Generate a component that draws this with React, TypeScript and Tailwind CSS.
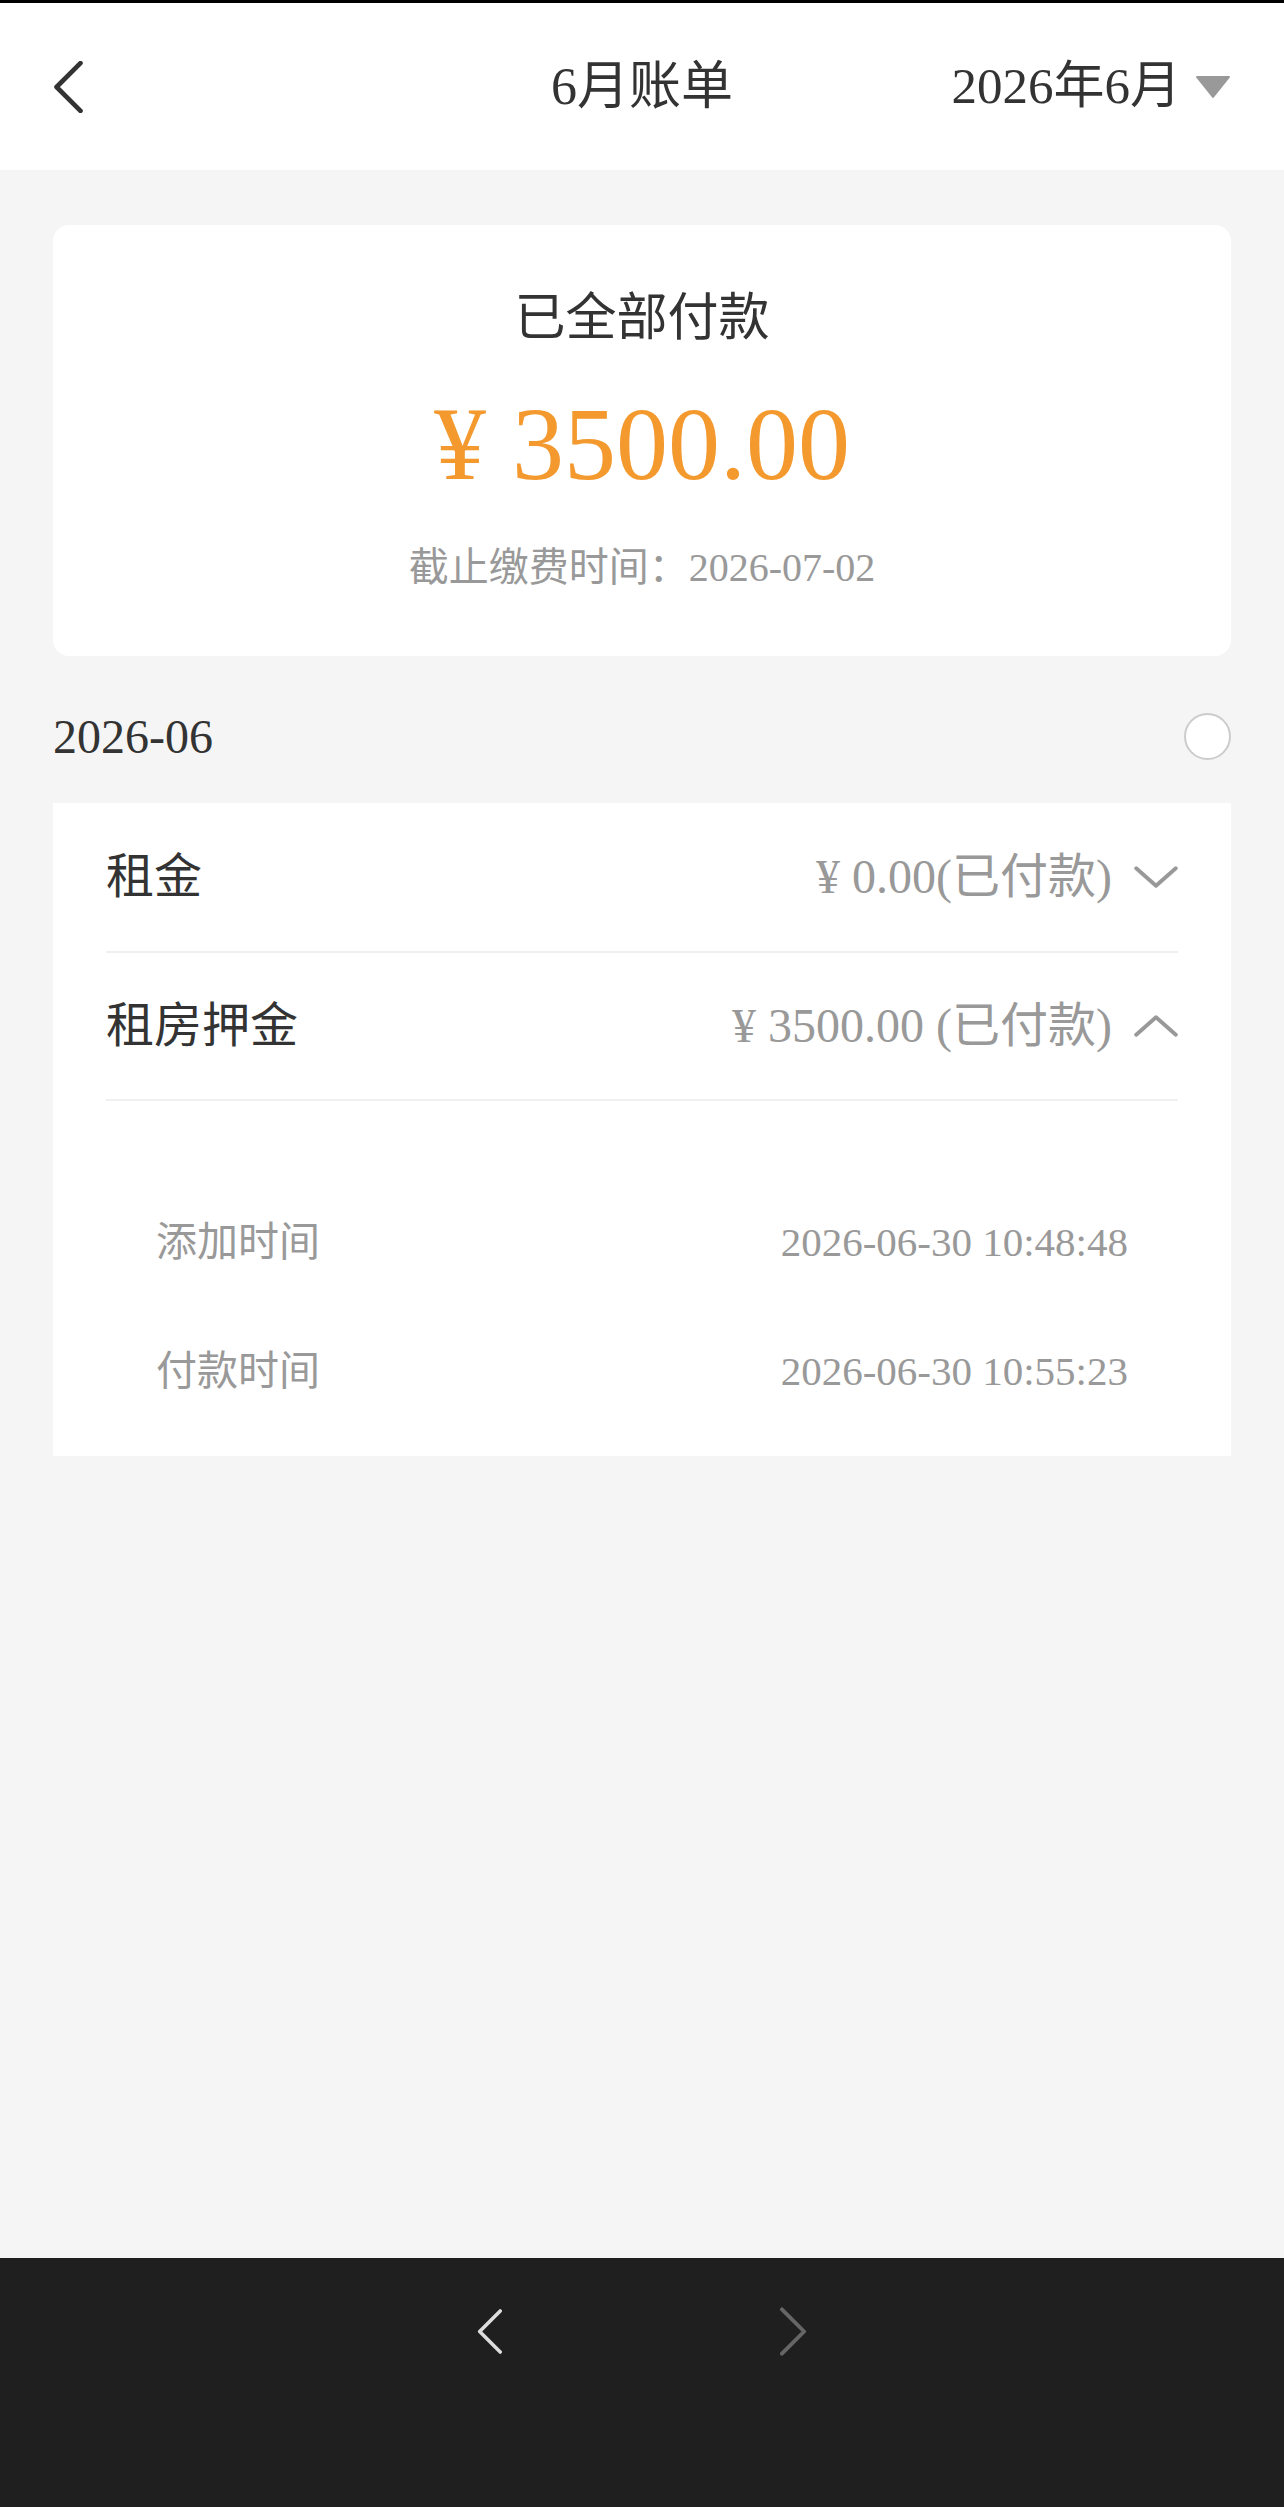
import { ReactNode } from 'react';

const items = [
    { label: '租金', value: '¥ 0.00(已付款)', open: false },
    { label: '租房押金', value: '¥ 3500.00 (已付款)', open: true },
];

const details = [
    { label: '添加时间', value: '2026-06-30 10:48:48' },
    { label: '付款时间', value: '2026-06-30 10:55:23' },
];

function Chevron({ dir, className }: { dir: 'left' | 'right' | 'up' | 'down'; className?: string }) {
    const paths: Record<string, ReactNode> = {
        left: <polyline points="26,2 3,25 26,48" />,
        right: <polyline points="2,2 25,25 2,48" />,
        down: <polyline points="2,2 20,18 38,2" />,
        up: <polyline points="2,18 20,2 38,18" />,
    };
    const box = dir === 'left' || dir === 'right' ? '0 0 28 50' : '0 0 40 20';
    return (
        <svg viewBox={box} className={className} fill="none" stroke="currentColor" strokeLinecap="round" strokeLinejoin="round">
            {paths[dir]}
        </svg>
    );
}

export default function App() {
    return (
        <div className="min-h-[2507px] flex flex-col bg-[#f5f5f5] font-['Liberation_Serif','Noto_Sans_CJK_SC',serif] text-[#333333]">
            <div className="h-[3px] bg-black" />

            {/* Header */}
            <header className="h-[167px] bg-white grid grid-cols-[1fr_auto_1fr] items-center px-[53px]">
                <div>
                    <Chevron dir="left" className="w-[30px] h-[52px] text-[#333333] [stroke-width:4.5]" />
                </div>
                <h1 className="text-[52px] leading-none">6月账单</h1>
                <div className="flex items-center justify-end gap-[14px]">
                    <span className="text-[51px] leading-none">2026年6月</span>
                    <svg viewBox="0 0 36 24" className="w-[36px] h-[24px] text-[#999999]">
                        <path d="M2 2 L34 2 L18 22 Z" fill="currentColor" stroke="currentColor" strokeWidth="2" strokeLinejoin="round" />
                    </svg>
                </div>
            </header>

            <main className="flex-1 px-[53px]">
                {/* Summary card */}
                <section className="mt-[55px] bg-white rounded-[16px] flex flex-col items-center pt-[68px] pb-[68px]">
                    <div className="text-[51px] leading-none">已全部付款</div>
                    <div className="mt-[48px] text-[104px] leading-none text-[#f3992e]">¥ 3500.00</div>
                    <div className="mt-[52px] text-[40px] leading-none text-[#999999]">截止缴费时间：2026-07-02</div>
                </section>

                {/* Month row */}
                <div className="flex items-center justify-between mt-[57px] mb-[43px] h-[47px]">
                    <span className="text-[48px] leading-none">2026-06</span>
                    <span className="w-[47px] h-[47px] rounded-full border-2 border-[#cccccc] bg-white" />
                </div>

                {/* Bill items */}
                <section className="bg-white px-[53px]">
                    {items.map((item, i) => (
                        <div
                            key={item.label}
                            className={`flex items-center justify-between border-b-2 border-[#f0f0f2] ${i === 0 ? 'h-[150px]' : 'h-[148px]'}`}
                        >
                            <span className="text-[48px] leading-none">{item.label}</span>
                            <div className="flex items-center gap-[22px]">
                                <span className="text-[48px] leading-none text-[#999999]">{item.value}</span>
                                <Chevron dir={item.open ? 'up' : 'down'} className="w-[44px] h-[22px] text-[#999999] [stroke-width:3.5]" />
                            </div>
                        </div>
                    ))}
                    <div className="px-[50px] pt-[77px] pb-[20px]">
                        {details.map(d => (
                            <div key={d.label} className="h-[129px] flex items-center justify-between text-[41px] leading-none text-[#999999]">
                                <span>{d.label}</span>
                                <span>{d.value}</span>
                            </div>
                        ))}
                    </div>
                </section>
            </main>

            {/* Bottom browser bar */}
            <footer className="h-[249px] bg-[#1f1f1f] flex justify-center items-start pt-[48px] gap-[278px]">
                <Chevron dir="left" className="w-[25px] h-[51px] text-[#dddddd] [stroke-width:4]" />
                <Chevron dir="right" className="w-[27px] h-[51px] text-[#666666] [stroke-width:4]" />
            </footer>
        </div>
    );
}
